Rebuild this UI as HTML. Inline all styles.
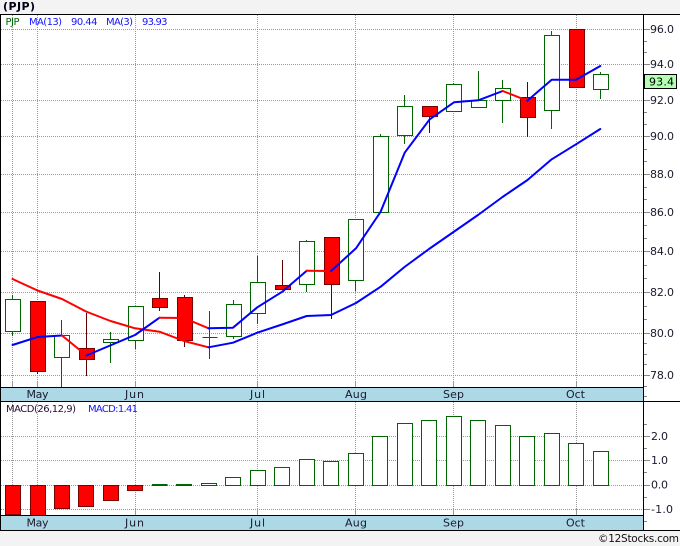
<!DOCTYPE html>
<html><head><meta charset="utf-8"><style>
html,body{margin:0;padding:0;background:#f3f3f3;width:680px;height:546px;overflow:hidden}
svg{display:block}
text{font-family:"DejaVu Sans",sans-serif;fill:#1a1a2e}
</style></head><body>
<svg width="680" height="546" viewBox="0 0 680 546" xmlns="http://www.w3.org/2000/svg">
<rect width="680" height="546" fill="#f3f3f3"/>
<rect x="0" y="14" width="680" height="517" fill="#fff"/>
<rect x="1" y="388" width="642" height="13" fill="#add8e6"/>
<rect x="1" y="516" width="642" height="14" fill="#add8e6"/>

<!-- grid -->
<path d="M1 29.5H644M1 64.5H644M1 100.5H644M1 136.5H644M1 174.5H644M1 212.5H644M1 251.5H644M1 292.5H644M1 333.5H644M1 375.5H644M1 436.5H644M1 460.5H644M1 485.5H644M1 509.5H644" stroke="#999" stroke-width="1" stroke-dasharray="1 1" fill="none"/>
<path d="M12.5 15V387M37.5 15V387M135.5 15V387M257.5 15V387M355.5 15V387M453.5 15V387M576.5 15V387M12.5 402V515M37.5 402V515M135.5 402V515M257.5 402V515M355.5 402V515M453.5 402V515M576.5 402V515" stroke="#999" stroke-width="1" stroke-dasharray="1 1" fill="none"/>
<path d="M37.5 381V387M135.5 381V387M257.5 381V387M355.5 381V387M453.5 381V387M576.5 381V387M12.5 381V387M37.5 509V515M135.5 509V515M257.5 509V515M355.5 509V515M453.5 509V515M576.5 509V515M12.5 509V515" stroke="#999" stroke-width="1" fill="none"/>

<!-- wicks -->
<path d="M12.5 295V336M61.5 320V387M110.5 332V363M135.5 306V349M209.5 311V359M233.5 300V339M257.5 256V324M306.5 240V292M355.5 219V291M380.5 134V212M404.5 95V144M453.5 83V111M478.5 71V107M502.5 80V123M551.5 31V129M600.5 72V99" stroke="#006400" stroke-width="1" fill="none"/>
<path d="M37.5 301V374M86.5 313V376M159.5 272V311M184.5 295V347M282.5 260V290M331.5 237V319M429.5 106V133M527.5 82V137M576.5 29V87" stroke="#600000" stroke-width="1" fill="none"/>

<!-- candles: up (hollow) -->
<g fill="#fff" stroke="#006400" stroke-width="1">
<rect x="5.5" y="299.5" width="15" height="32"/>
<rect x="54.5" y="335.5" width="15" height="22"/>
<rect x="103.5" y="339.5" width="15" height="3"/>
<rect x="128.5" y="306.5" width="15" height="34"/>
<rect x="226.5" y="304.5" width="15" height="32"/>
<rect x="250.5" y="282.5" width="15" height="31"/>
<rect x="299.5" y="241.5" width="15" height="43"/>
<rect x="348.5" y="219.5" width="15" height="61"/>
<rect x="373.5" y="136.5" width="15" height="76"/>
<rect x="397.5" y="106.5" width="15" height="29"/>
<rect x="446.5" y="84.5" width="15" height="27"/>
<rect x="471.5" y="100.5" width="15" height="7"/>
<rect x="495.5" y="88.5" width="15" height="12"/>
<rect x="544.5" y="35.5" width="15" height="75"/>
<rect x="593.5" y="74.5" width="15" height="15"/>
</g>
<path d="M202.5 337.5H217.5" stroke="#006400" stroke-width="1"/>
<!-- candles: down (red) -->
<g fill="#ff0000" stroke="#7a0000" stroke-width="1">
<rect x="30.5" y="301.5" width="15" height="70"/>
<rect x="79.5" y="348.5" width="15" height="11"/>
<rect x="152.5" y="298.5" width="15" height="9"/>
<rect x="177.5" y="297.5" width="15" height="43"/>
<rect x="275.5" y="285.5" width="15" height="4"/>
<rect x="324.5" y="237.5" width="15" height="47"/>
<rect x="422.5" y="106.5" width="15" height="10"/>
<rect x="520.5" y="97.5" width="15" height="20"/>
<rect x="569.5" y="29.5" width="15" height="58"/>
</g>

<!-- MA lines -->
<g fill="none" stroke-width="2" stroke-linejoin="round" stroke-linecap="round">
<path stroke="#ff0000" d="M12.5 279L37.5 290.5L62 299L86 311.5L110.5 321L135 328.3L159.5 331.7L184 341L208.5 347.3"/>
<path stroke="#0000ff" d="M12.5 345L37.5 337L62 335.5"/>
<path stroke="#ff0000" d="M62 335.5L86.5 355.5"/>
<path stroke="#0000ff" d="M86.5 355.5L135 335L159.5 317.7"/>
<path stroke="#ff0000" d="M159.5 317.7L184 318L208.5 328.3"/>
<path stroke="#0000ff" d="M208.5 328.3L233 327.7L257.3 307.3L282.3 291.7L306.7 270.7"/>
<path stroke="#ff0000" d="M306.7 270.7L331 271"/>
<path stroke="#0000ff" d="M331 271L356 248.3L380.5 212L404.7 152.7L429.7 119.3L454 102.3L478.3 100.3L502.7 91"/>
<path stroke="#ff0000" d="M502.7 91L527.3 100.7"/>
<path stroke="#0000ff" d="M527.3 100.7L551.7 79.7L576 79.7L600.3 66"/>
<path stroke="#0000ff" d="M208.5 347.3L233 342.7L257.3 332.7L282 324.5L306.7 316L331 315L356 303L380.7 286.7L404.5 267L429 249L453.5 232L478 215L502.5 197L527.5 180L551.7 159.3L576 144.3L600.3 129"/>
</g>

<!-- MACD bars -->
<g fill="#ff0000" stroke="#7a0000" stroke-width="1">
<rect x="5.5" y="485.5" width="15" height="29"/>
<rect x="30.5" y="485.5" width="15" height="30"/>
<rect x="54.5" y="485.5" width="15" height="23"/>
<rect x="78.5" y="485.5" width="15" height="21"/>
<rect x="103.5" y="485.5" width="15" height="15"/>
<rect x="127.5" y="485.5" width="15" height="5"/>
</g>
<path d="M152 485H167.5M176 485H192" stroke="#006400" stroke-width="2"/>
<g fill="#fff" stroke="#006400" stroke-width="1">
<rect x="201.5" y="483.5" width="15" height="2"/>
<rect x="225.5" y="477.5" width="15" height="8"/>
<rect x="250.5" y="470.5" width="15" height="15"/>
<rect x="274.5" y="467.5" width="15" height="18"/>
<rect x="299.5" y="459.5" width="15" height="26"/>
<rect x="323.5" y="461.5" width="15" height="24"/>
<rect x="348.5" y="453.5" width="15" height="32"/>
<rect x="372.5" y="436.5" width="15" height="49"/>
<rect x="397.5" y="423.5" width="15" height="62"/>
<rect x="421.5" y="420.5" width="15" height="65"/>
<rect x="446.5" y="416.5" width="15" height="69"/>
<rect x="470.5" y="420.5" width="15" height="65"/>
<rect x="495.5" y="425.5" width="15" height="60"/>
<rect x="519.5" y="436.5" width="15" height="49"/>
<rect x="544.5" y="433.5" width="15" height="52"/>
<rect x="568.5" y="443.5" width="15" height="42"/>
<rect x="593.5" y="451.5" width="15" height="34"/>
</g>

<!-- axis ticks -->
<path d="M644 29.5H650M644 64.5H650M644 100.5H650M644 136.5H650M644 174.5H650M644 212.5H650M644 251.5H650M644 292.5H650M644 333.5H650M644 375.5H650M644 436.5H650M644 460.5H650M644 485.5H650M644 509.5H650" stroke="#888" stroke-width="1"/>
<path d="M644 41.5H647M644 52.5H647M644 112.5H647M644 124.5H647M644 149.5H647M644 161.5H647M644 187.5H647M644 199.5H647M644 225.5H647M644 238.5H647M644 265.5H647M644 278.5H647M644 306.5H647M644 319.5H647M644 343.5H647M644 354.5H647M644 364.5H647M644 386.5H647M644 396.5H647M644 424.5H647M644 448.5H647M644 472.5H647M644 497.5H647M644 521.5H647" stroke="#888" stroke-width="1"/>

<!-- frame -->
<path d="M0 14.5H680M0.5 14V531M643.5 14V531M0 387.5H643.5M0 401.5H680M0 515.5H643.5M0 530.5H680" stroke="#000" stroke-width="1" fill="none"/>

<!-- price box -->
<rect x="644.5" y="74.5" width="32" height="14" fill="#b4ffb4" stroke="#000" stroke-width="1"/>

<!-- text -->
<text x="3" y="10" font-size="11" font-weight="bold" textLength="32" style="fill:#000018">(PJP)</text>
<text x="5.5" y="25" font-size="10" textLength="14" style="fill:#006400">PJP</text>
<text x="29" y="25" font-size="10" textLength="33" style="fill:#1414ff">MA(13)</text>
<text x="71" y="25" font-size="10" textLength="26.5" style="fill:#1414ff">90.44</text>
<text x="106" y="25" font-size="10" textLength="27" style="fill:#1414ff">MA(3)</text>
<text x="142" y="25" font-size="10" textLength="25.5" style="fill:#1414ff">93.93</text>

<g font-size="11">
<text x="650" y="33" textLength="24">96.0</text>
<text x="650" y="68" textLength="24">94.0</text>
<text x="650" y="104" textLength="24">92.0</text>
<text x="650" y="140" textLength="24">90.0</text>
<text x="650" y="178" textLength="24">88.0</text>
<text x="650" y="216" textLength="24">86.0</text>
<text x="650" y="255" textLength="24">84.0</text>
<text x="650" y="296" textLength="24">82.0</text>
<text x="650" y="337" textLength="24">80.0</text>
<text x="650" y="379" textLength="24">78.0</text>
<text x="649" y="85.5" textLength="25" style="fill:#000">93.4</text>
<text x="651" y="440" textLength="17">2.0</text>
<text x="651" y="464" textLength="17">1.0</text>
<text x="651" y="488.5" textLength="17">0.0</text>
<text x="651" y="513" textLength="22">-1.0</text>
<text x="26.5" y="398" textLength="22">May</text>
<text x="125" y="398" textLength="19">Jun</text>
<text x="250" y="398" textLength="15">Jul</text>
<text x="345" y="398" textLength="22">Aug</text>
<text x="443" y="398" textLength="21">Sep</text>
<text x="566" y="398" textLength="19">Oct</text>
<text x="26.5" y="526.5" textLength="22">May</text>
<text x="125" y="526.5" textLength="19">Jun</text>
<text x="250" y="526.5" textLength="15">Jul</text>
<text x="345" y="526.5" textLength="22">Aug</text>
<text x="443" y="526.5" textLength="21">Sep</text>
<text x="566" y="526.5" textLength="19">Oct</text>
</g>
<text x="6" y="412" font-size="10" textLength="70" style="fill:#2a0a3a">MACD(26,12,9)</text>
<text x="88" y="412" font-size="10" textLength="50" style="fill:#1414ff">MACD:1.41</text>
<text x="598" y="542" font-size="10.5" textLength="81" style="fill:#111">©12Stocks.com</text>
</svg>
</body></html>
